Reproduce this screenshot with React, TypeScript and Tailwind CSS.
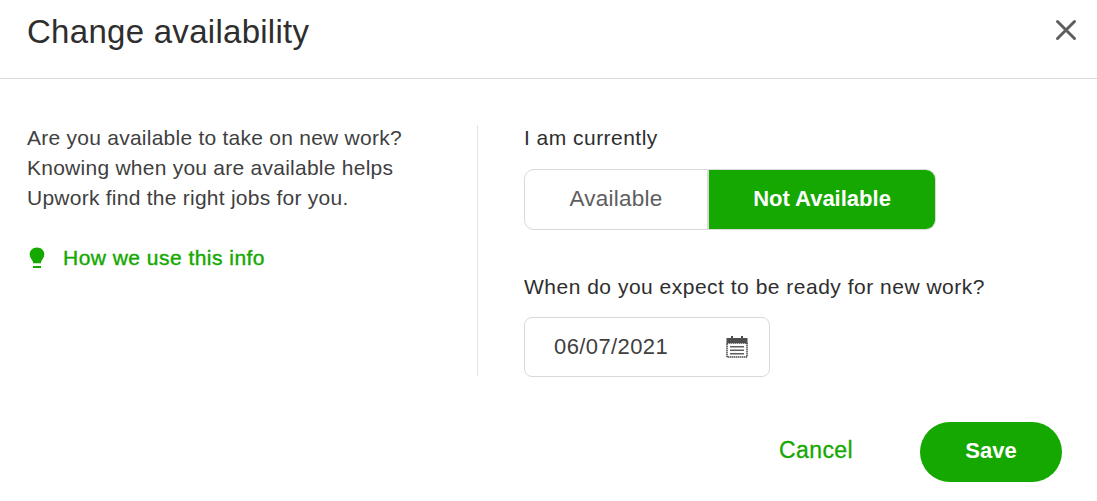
import React from 'react';

const sans = { fontFamily: '"Liberation Sans", Arial, sans-serif' };

const Bulb = () => (
  <svg width="18" height="22" viewBox="0 0 18 22" fill="#14a800">
    <path d="M9 0.5C5 0.5 1.7 3.300 1.700 7.300c0 2.900 1.600 4.400 2.600 6.200.5.900.7 1.700.8 2.700h7.800c.1-1 .3-1.800.8-2.700 1-1.800 2.600-3.300 2.600-6.200C16.300 3.300 13 0.500 9 0.500z" />
    <rect x="5" y="19" width="8" height="2" />
  </svg>
);

const Calendar = () => (
  <svg width="24" height="24" viewBox="0 0 24 24">
    <rect x="6" y="1" width="2" height="4" fill="#4d4d4d" />
    <rect x="16" y="1" width="2" height="4" fill="#4d4d4d" />
    <rect x="1.500" y="3" width="21" height="6" fill="#4d4d4d" />
    <rect x="2" y="8" width="20" height="14" fill="#fff" stroke="#4d4d4d" strokeWidth="1.500" strokeDasharray="1.500 0.500" />
    <rect x="5" y="11" width="14" height="1.500" fill="#5e5e5e" />
    <rect x="5" y="14.500" width="14" height="1.500" fill="#5e5e5e" />
    <rect x="5" y="18" width="14" height="1.500" fill="#5e5e5e" />
  </svg>
);

const Close = () => (
  <svg width="24" height="24" viewBox="0 0 24 24" fill="none" stroke="#5e5e5e" strokeWidth="3" strokeLinecap="round">
    <path d="M3.500 3.500 20.500 20.500M20.500 3.500 3.500 20.500" />
  </svg>
);

export default function App() {
  return (
    <div className="w-[1097px] h-[501px] bg-white overflow-hidden text-[#2e2e2e]" style={sans}>
      {/* header */}
      <div className="h-[79px] border-b border-[#d9d9d9] flex items-start justify-between pl-[27px] pr-[19px]">
        <h1 className="text-[33px] leading-[38px] mt-[13px] font-normal tracking-[0.28px]">Change availability</h1>
        <button className="mt-[18px]"><Close /></button>
      </div>

      {/* body */}
      <div className="flex mt-[46px] h-[251px]">
        <div className="w-[478px] pl-[27px] border-r border-[#e4e4e4]">
          <p className="text-[21px] leading-[30px] text-[#3f3f3f] tracking-[0.25px] -mt-[2px]">
            Are you available to take on new work?<br />
            Knowing when you are available helps<br />
            Upwork find the right jobs for you.
          </p>
          <a className="flex items-center gap-[17px] mt-[30px] pl-[1px] text-[21px] leading-[30px] tracking-[0.47px] text-[#14a800] [-webkit-text-stroke:0.4px_#14a800]">
            <Bulb />
            How we use this info
          </a>
        </div>

        <div className="pl-[46px]">
          <div className="text-[21px] leading-[28px] tracking-[0.47px] -mt-[1px]">I am currently</div>
          <div className="flex w-[412px] h-[61px] mt-[17px] border border-[#d9d9d9] rounded-[10px] overflow-hidden">
            <div className="w-[184px] flex items-center justify-center text-[22.5px] tracking-[0.25px] text-[#5e5e5e] border-r-[2px] border-[#d9d9d9] pb-[2px]">Available</div>
            <div className="flex-1 flex items-center justify-center text-[22px] font-bold text-white bg-[#14a800] pb-[2px]">Not Available</div>
          </div>
          <div className="text-[21px] leading-[28px] mt-[43px] tracking-[0.5px]">When do you expect to be ready for new work?</div>
          <div className="flex items-center justify-between w-[246px] h-[60px] mt-[16px] border border-[#d9d9d9] rounded-[8px] pl-[29px] pr-[20px]">
            <span className="text-[22px] tracking-[0.4px] text-[#3f3f3f] pb-[2px]">06/07/2021</span>
            <Calendar />
          </div>
        </div>
      </div>

      {/* footer */}
      <div className="flex items-center justify-end mt-[46px] pr-[35px]">
        <button className="text-[23px] tracking-[0.4px] text-[#14a800] mr-[67px] pb-[3px] [-webkit-text-stroke:0.3px_#14a800]">Cancel</button>
        <button className="w-[142px] h-[60px] rounded-full bg-[#14a800] text-white text-[22px] font-bold pb-[3px]">Save</button>
      </div>
    </div>
  );
}
